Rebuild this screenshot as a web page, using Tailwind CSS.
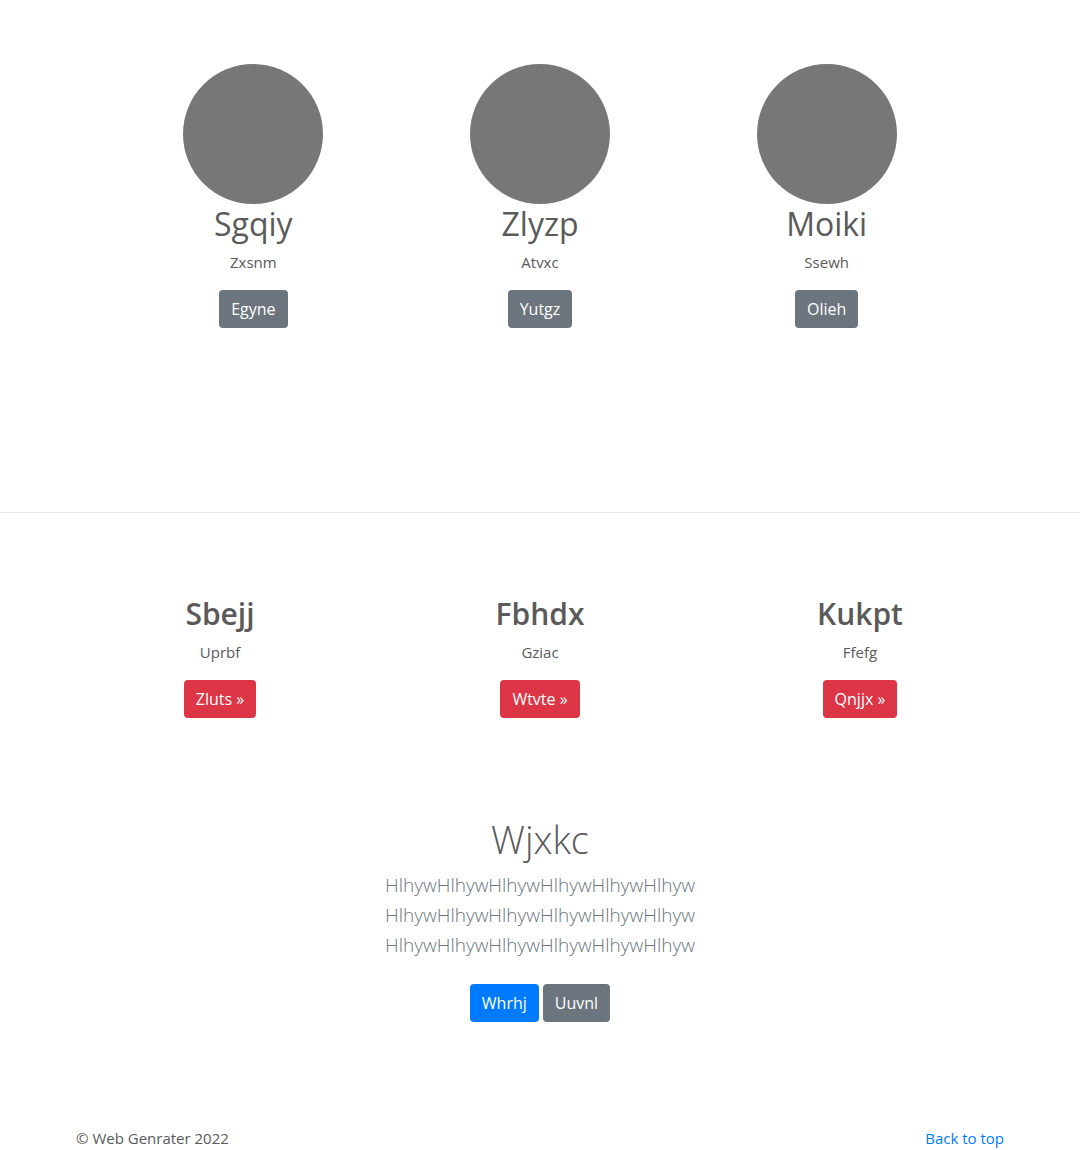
<!DOCTYPE html>
<html lang="en">
<head>
<meta charset="utf-8">
<meta name="viewport" content="width=device-width, initial-scale=1">
<title>Web Genrater</title>
<script src="https://cdn.jsdelivr.net/npm/@tailwindcss/browser@4"></script>
</head>
<body id="top" class="bg-white font-['Segoe_UI','Open_Sans','Noto_Sans',sans-serif] text-[15px] leading-6 text-[#5a5a5a]">
<main>
  <section class="mx-auto grid max-w-[860px] grid-cols-3 pt-16 text-center">
    <div class="flex flex-col items-center">
      <div class="size-[140px] rounded-full bg-[#777]"></div>
      <h2 class="mb-[6px] text-[32px] leading-[40px]">Sgqiy</h2>
      <p class="mb-4">Zxsnm</p>
      <button class="h-[38px] rounded bg-[#6c757d] px-3 text-[16px] text-white">Egyne</button>
    </div>
    <div class="flex flex-col items-center">
      <div class="size-[140px] rounded-full bg-[#777]"></div>
      <h2 class="mb-[6px] text-[32px] leading-[40px]">Zlyzp</h2>
      <p class="mb-4">Atvxc</p>
      <button class="h-[38px] rounded bg-[#6c757d] px-3 text-[16px] text-white">Yutgz</button>
    </div>
    <div class="flex flex-col items-center">
      <div class="size-[140px] rounded-full bg-[#777]"></div>
      <h2 class="mb-[6px] text-[32px] leading-[40px]">Moiki</h2>
      <p class="mb-4">Ssewh</p>
      <button class="h-[38px] rounded bg-[#6c757d] px-3 text-[16px] text-white">Olieh</button>
    </div>
  </section>
  <hr class="mt-46 border-black/10">
  <section class="mx-auto grid max-w-[960px] grid-cols-3 pt-[81px] text-center">
    <div class="flex flex-col items-center">
      <h2 class="mb-[6px] text-[30px] leading-[40px] font-semibold">Sbejj</h2>
      <p class="mb-4">Uprbf</p>
      <button class="h-[38px] rounded bg-[#dc3545] px-3 text-[16px] text-white">Zluts »</button>
    </div>
    <div class="flex flex-col items-center">
      <h2 class="mb-[6px] text-[30px] leading-[40px] font-semibold">Fbhdx</h2>
      <p class="mb-4">Gziac</p>
      <button class="h-[38px] rounded bg-[#dc3545] px-3 text-[16px] text-white">Wtvte »</button>
    </div>
    <div class="flex flex-col items-center">
      <h2 class="mb-[6px] text-[30px] leading-[40px] font-semibold">Kukpt</h2>
      <p class="mb-4">Ffefg</p>
      <button class="h-[38px] rounded bg-[#dc3545] px-3 text-[16px] text-white">Qnjjx »</button>
    </div>
  </section>
  <section class="pt-24 text-center">
    <h1 class="mb-[6px] text-[38px] leading-[50px] font-light">Wjxkc</h1>
    <p class="mb-6 text-[19px] leading-[30px] font-light text-[#6c757d]">HlhywHlhywHlhywHlhywHlhywHlhyw<br>HlhywHlhywHlhywHlhywHlhywHlhyw<br>HlhywHlhywHlhywHlhywHlhywHlhyw</p>
    <div class="flex justify-center gap-1">
      <button class="h-[38px] rounded bg-[#007bff] px-3 text-[16px] text-white">Whrhj</button>
      <button class="h-[38px] rounded bg-[#6c757d] px-3 text-[16px] text-white">Uuvnl</button>
    </div>
  </section>
</main>
<footer class="mx-auto flex max-w-[960px] justify-between px-4 pt-26">
  <p>© Web Genrater 2022</p>
  <a href="#top" class="text-[#007bff]">Back to top</a>
</footer>
</body>
</html>
